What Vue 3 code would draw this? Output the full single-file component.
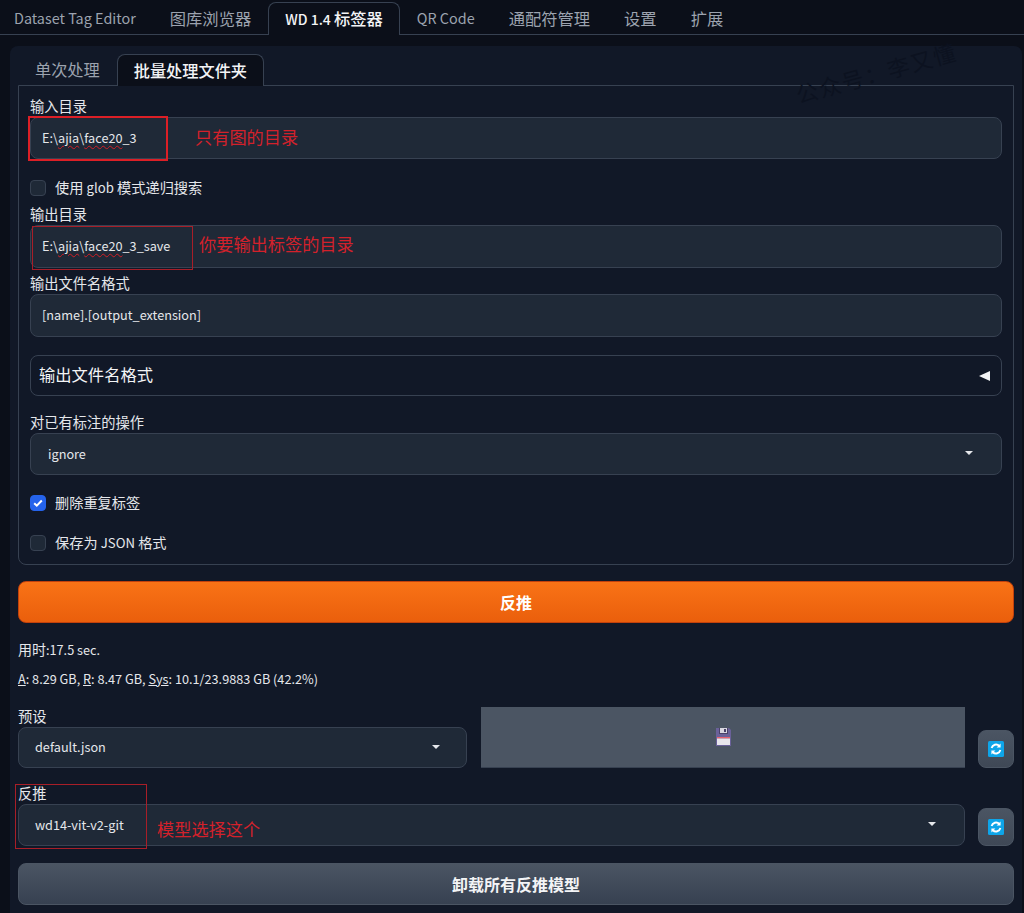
<script setup>
const topTabs = [
  { text: 'Dataset Tag Editor', latin: true },
  { text: '图库浏览器' },
  { latinPart: 'WD 1.4 ', text: '标签器', active: true },
  { text: 'QR Code', latin: true },
  { text: '通配符管理' },
  { text: '设置' },
  { text: '扩展' },
]
const marks = ['mark-input', 'mark-output', 'mark-model']
const notes = [
  { cls: 'note-input', text: '只有图的目录' },
  { cls: 'note-output', text: '你要输出标签的目录' },
  { cls: 'note-model', text: '模型选择这个' },
]
</script>

<template>
  <div class="page">
    <nav class="top-tabs">
      <button
        v-for="t in topTabs"
        :key="t.text"
        class="top-tab"
        :class="{ active: t.active, latin: t.latin }"
      ><span v-if="t.latinPart" class="tab-lat">{{ t.latinPart }}</span>{{ t.text }}</button>
    </nav>

    <main class="panel">
      <div class="sub-tabs">
        <button class="sub-tab">单次处理</button>
        <button class="sub-tab active">批量处理文件夹</button>
      </div>

      <section class="box">
        <label class="label first">输入目录</label>
        <div class="field h42"><span class="sq">E:\<u>ajia</u>\<u>face20</u>_3</span></div>

        <div class="check check-glob"><i class="cb"></i><span>使用 <b>glob</b> 模式递归搜索</span></div>

        <label class="label out">输出目录</label>
        <div class="field"><span class="sq">E:\<u>ajia</u>\<u>face20</u>_3_save</span></div>

        <label class="label name">输出文件名格式</label>
        <div class="field">[name].[output_extension]</div>

        <div class="accordion">
          <span>输出文件名格式</span>
          <span class="tri"></span>
        </div>

        <label class="label ops">对已有标注的操作</label>
        <div class="field h42 select">
          <span>ignore</span><span class="caret"></span>
        </div>

        <div class="check check-dedupe">
          <i class="cb on">
            <svg viewBox="0 0 16 16" width="16" height="16"><path d="M4.2 8.2l2.6 2.5 5-5.2" fill="none" stroke="#fff" stroke-width="2"/></svg>
          </i><span>删除重复标签</span>
        </div>
        <div class="check check-json"><i class="cb"></i><span>保存为 <b>JSON</b> 格式</span></div>
      </section>

      <button class="btn-primary">反推</button>

      <p class="time"><span class="cjk">用时</span>:17.5 sec.</p>
      <p class="mem"><u>A</u>: 8.29 GB, <u>R</u>: 8.47 GB, <u>Sys</u>: 10.1/23.9883 GB (42.2%)</p>

      <div class="preset-row">
        <div class="preset-col">
          <label class="label plain">预设</label>
          <div class="field select preset-select">
            <span>default.json</span><span class="caret"></span>
          </div>
        </div>
        <button class="save" aria-label="保存">
          <svg viewBox="0 0 15 18" width="15" height="18">
            <path d="M0 0h13l2 2v16H0z" fill="#6a6199"/>
            <rect x="3" y="0" width="9" height="6" fill="#4a4268"/>
            <rect x="4" y="0" width="7" height="5" fill="#d8d6e0"/>
            <rect x="8" y="1" width="2" height="3" fill="#4a4268"/>
            <rect x="1" y="9" width="13" height="1.5" fill="#e8606e"/>
            <rect x="1" y="10.5" width="13" height="6.5" fill="#e8e6ec"/>
          </svg>
        </button>
        <button class="refresh" aria-label="刷新">
          <svg viewBox="0 0 16 16" width="16" height="16">
            <rect width="16" height="16" rx="1.5" fill="#0ea5e9"/>
            <path d="M3.6 7a4.6 4.6 0 0 1 7.6-2.2M12.4 9a4.6 4.6 0 0 1-7.6 2.2" fill="none" stroke="#fff" stroke-width="1.9"/>
            <path d="M12.6 2.6v4h-4zM3.4 13.4v-4h4z" fill="#fff"/>
          </svg>
        </button>
      </div>

      <div class="model-row">
        <div class="preset-col grow">
          <label class="label plain">反推</label>
          <div class="field select model-select">
            <span>wd14-vit-v2-git</span><span class="caret"></span>
          </div>
        </div>
        <button class="refresh" aria-label="刷新">
          <svg viewBox="0 0 16 16" width="16" height="16">
            <rect width="16" height="16" rx="1.5" fill="#0ea5e9"/>
            <path d="M3.6 7a4.6 4.6 0 0 1 7.6-2.2M12.4 9a4.6 4.6 0 0 1-7.6 2.2" fill="none" stroke="#fff" stroke-width="1.9"/>
            <path d="M12.6 2.6v4h-4zM3.4 13.4v-4h4z" fill="#fff"/>
          </svg>
        </button>
      </div>

      <button class="btn-secondary">卸载所有反推模型</button>
    </main>

    <div class="watermark">公众号：李又懂</div>
    <div v-for="m in marks" :key="m" class="mark" :class="m"></div>
    <div v-for="n in notes" :key="n.cls" class="note" :class="n.cls">{{ n.text }}</div>
  </div>
</template>

<style>
html, body { margin: 0; background: #0b0f19; }
</style>

<style scoped>
.page {
  position: relative;
  width: 1024px;
  height: 913px;
  overflow: hidden;
  background: #0b0f19;
  color: #e5e7eb;
  font-family: "Noto Sans CJK SC", "Noto Sans", sans-serif;
  font-size: 14px;
}
button { font-family: inherit; margin: 0; }
.top-tabs {
  display: flex;
  align-items: flex-start;
  height: 34px;
  margin-left: -3px;
  border-bottom: 1px solid #374151;
}
.top-tab {
  height: 32px;
  margin-top: 2px;
  padding: 0 16px 2px;
  border: 1px solid transparent;
  border-bottom: 0;
  border-radius: 8px 8px 0 0;
  background: none;
  color: #9ca3af;
  font-size: 16.3px;
  white-space: nowrap;
}
.top-tab.latin { font-size: 14.4px; }
.tab-lat { font-size: 14px; }
.top-tab.active {
  height: 33px;
  color: #f3f4f6;
  font-weight: 500;
  background: #0b0f19;
  border-color: #374151;
  position: relative;
}
.panel {
  margin: 11px 2px 0 10px;
  padding: 8px 8px 0;
  height: 900px;
  background: #111827;
  border-radius: 8px 8px 0 0;
  box-sizing: border-box;
}
.sub-tabs {
  display: flex;
  align-items: flex-start;
  height: 31px;
}
.sub-tab {
  padding: 0 16px 2px;
  height: 31px;
  background: none;
  border: 1px solid transparent;
  border-bottom: 0;
  border-radius: 8px 8px 0 0;
  color: #9ca3af;
  font-size: 16.2px;
}
.sub-tab.active {
  height: 32px;
  background: #0b0f19;
  border-color: #374151;
  color: #f3f4f6;
  font-weight: 500;
  position: relative;
  z-index: 1;
}
.box {
  width: 996px;
  height: 480px;
  box-sizing: border-box;
  padding: 0 11px;
  border: 1px solid #374151;
  border-radius: 0 0 8px 8px;
}
.label {
  display: block;
  height: 20px;
  line-height: 19px;
  margin-bottom: 1px;
  color: #e5e7eb;
  font-size: 14.25px;
}
.label.first { margin-top: 10px; }
.label.out { margin-top: 6px; }
.label.name { margin-top: 5px; }
.label.ops { margin-top: 16px; }
.label.plain { margin: 0; line-height: 17px; }
.field {
  display: flex;
  align-items: center;
  height: 43px;
  box-sizing: border-box;
  padding: 0 11px 2px;
  background: #1f2937;
  border: 1px solid #374151;
  border-radius: 8px;
  color: #e5e7eb;
  font-size: 12.7px;
}
.field.h42 { height: 42px; }
.sq u {
  text-decoration: underline wavy #d11f26 1px;
  text-underline-offset: 2px;
}
.check {
  display: flex;
  align-items: center;
  gap: 9px;
  height: 20px;
  color: #e5e7eb;
  font-size: 14.2px;
}
.check span { padding-bottom: 2px; }
.check b { font-weight: 400; font-size: 13.2px; }
.check-glob { margin-top: 19px; }
.check-dedupe { margin-top: 18px; }
.check-json { margin-top: 20px; }
.cb {
  display: flex;
  width: 16px;
  height: 16px;
  box-sizing: border-box;
  border: 1px solid #374151;
  border-radius: 4px;
  background: #1f2937;
  flex: none;
}
.cb.on {
  border-color: #2563eb;
  background: #2563eb;
}
.cb.on svg { margin: -1px; }
.accordion {
  display: flex;
  justify-content: space-between;
  align-items: center;
  height: 41px;
  margin-top: 18px;
  padding: 0 11px 3px 8px;
  box-sizing: border-box;
  border: 1px solid #374151;
  border-radius: 8px;
  font-size: 16.3px;
  color: #f3f4f6;
}
.tri {
  width: 0;
  height: 0;
  margin-top: 3px;
  border-top: 5px solid transparent;
  border-bottom: 5px solid transparent;
  border-right: 11px solid #f3f4f6;
}
.select {
  justify-content: space-between;
  padding: 0 28px 2px 17px;
}
.caret {
  width: 0;
  height: 0;
  border-left: 4px solid transparent;
  border-right: 4px solid transparent;
  border-top: 4px solid #e5e7eb;
}
.btn-primary, .btn-secondary {
  display: block;
  width: 996px;
  height: 42px;
  border-radius: 8px;
  font-size: 16px;
  font-weight: 700;
}
.btn-primary {
  margin-top: 16px;
  color: #fff;
  border: 1px solid #c2410c;
  background: linear-gradient(to bottom, #f97316, #ea5f0c);
}
.time, .mem {
  margin: 0;
  line-height: 20px;
  font-size: 12.7px;
  color: #e5e7eb;
}
.time .cjk { font-size: 14px; }
.time { margin-top: 16px; }
.mem { margin-top: 9px; }
.mem u { text-decoration: underline; text-underline-offset: 1px; }
.preset-row {
  display: flex;
  margin-top: 18px;
  height: 61px;
  align-items: flex-end;
}
.preset-col { width: 449px; }
.preset-col.grow { width: 947px; }
.preset-select { height: 41px; padding: 0 26px 2px 16px; }
.save {
  display: flex;
  align-items: center;
  justify-content: center;
  width: 484px;
  height: 61px;
  margin-left: 14px;
  padding: 0;
  background: #4b5563;
  border: 0;
  border-bottom: 1px solid #374151;
}
.refresh {
  display: flex;
  align-items: center;
  justify-content: center;
  width: 36px;
  height: 38px;
  margin-left: 13px;
  padding: 0;
  background: linear-gradient(to bottom, #4b5563, #3f4856);
  border: 1px solid #4b5563;
  border-radius: 8px;
}
.model-row {
  display: flex;
  align-items: flex-end;
  height: 62px;
  margin-top: 16px;
}
.model-select { height: 42px; padding: 0 28px 2px 16px; }
.btn-secondary {
  margin-top: 17px;
  color: #f3f4f6;
  border: 1px solid #4b5563;
  background: linear-gradient(to bottom, #4b5563, #374151);
}
.watermark {
  position: absolute;
  left: 793px;
  top: 57px;
  font-size: 22px;
  line-height: 30px;
  letter-spacing: 1.7px;
  color: #0c1220;
  transform: rotate(-15.5deg);
  pointer-events: none;
  white-space: nowrap;
}
.mark {
  position: absolute;
  box-sizing: border-box;
  pointer-events: none;
}
.mark-input { left: 28px; top: 116px; width: 140px; height: 45px; border: 2px solid #dc1f26; }
.mark-output { left: 32px; top: 226px; width: 161px; height: 44px; border: 1px solid #a81e28; }
.mark-model { left: 15px; top: 784px; width: 132px; height: 65px; border: 1px solid #a81e28; }
.note {
  position: absolute;
  color: #d3212b;
  font-size: 17.2px;
  line-height: 24px;
  white-space: nowrap;
  pointer-events: none;
}
.note-input { left: 195px; top: 125px; }
.note-output { left: 199px; top: 232px; }
.note-model { left: 157px; top: 817px; }
</style>
